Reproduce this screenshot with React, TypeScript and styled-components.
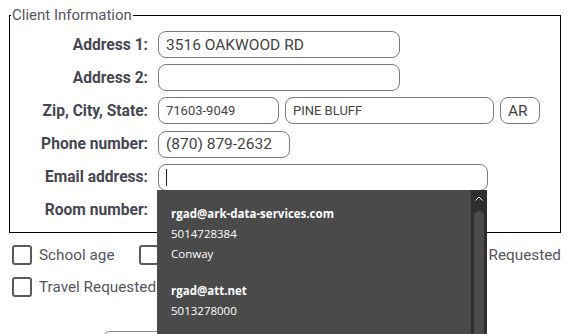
import React from 'react';
import styled, { createGlobalStyle } from 'styled-components';

const GlobalStyle = createGlobalStyle`
  html, body {
    margin: 0;
    padding: 0;
    background: #fff;
    overflow: hidden;
  }
  body {
    font-family: Roboto, "Liberation Sans", sans-serif;
  }
`;

const Page = styled.div`
  width: 567px;
  height: 334px;
  overflow: hidden;
  padding: 7px 6px 0 9px;
  box-sizing: border-box;
`;

const FieldSet = styled.fieldset`
  margin: 0;
  padding: 0 0 8px 0;
  border: 1px solid #000;
  min-width: 0;
`;

const Legend = styled.legend`
  padding: 0 1px;
  margin-left: 1px;
  font-size: 15px;
  color: #555560;
  line-height: 16px;
`;

const FormGrid = styled.div`
  display: grid;
  grid-template-columns: 138px auto;
  column-gap: 10px;
  row-gap: 6.2px;
  align-items: center;
  padding-top: 8px;
`;

const Label = styled.label`
  text-align: right;
  font-weight: 700;
  font-size: 15.6px;
  color: #464652;
`;

const Inputs = styled.div`
  display: flex;
  gap: 6px;
  align-items: center;
`;

const TextBox = styled.div<{ w: number; small?: boolean }>`
  position: relative;
  width: ${p => p.w}px;
  height: 27px;
  box-sizing: border-box;
  border: 1px solid #7a7a7a;
  border-radius: 8px;
  padding: 0 7px;
  display: flex;
  align-items: center;
  font-size: ${p => (p.small ? 13 : 15.5)}px;
  color: #444;
`;

const Caret = styled.span`
  display: inline-block;
  width: 1px;
  height: 17px;
  background: #222;
`;

const Dropdown = styled.div`
  position: absolute;
  top: 25px;
  left: -2px;
  width: 330px;
  height: 160px;
  background: #4a4a4a;
  z-index: 5;
  font-family: "Open Sans", "Noto Sans", sans-serif;
  color: #fff;
`;

const Options = styled.div`
  padding: 14px 0 0 14px;
  font-size: 11.5px;
  line-height: 20px;
`;

const Option = styled.div`
  margin-bottom: 17px;
`;

const Email = styled.div`
  font-weight: 700;
`;

const ScrollTrack = styled.div`
  position: absolute;
  top: 0;
  right: 0;
  width: 16px;
  height: 100%;
  background: #2e2e2e;
`;

const ScrollUp = styled.div`
  height: 18px;
  display: flex;
  align-items: center;
  justify-content: center;
`;

const ScrollThumb = styled.div`
  margin: 3px 3px 0 3px;
  height: 200px;
  background: #4b4b4b;
  border-radius: 5px 5px 0 0;
`;

const Checks = styled.div`
  display: flex;
  flex-direction: column;
  gap: 12px;
  padding: 12px 0 0 3px;
`;

const CheckRow = styled.div`
  display: flex;
  gap: 24px;
`;

const CheckItem = styled.label<{ push?: boolean }>`
  display: flex;
  align-items: center;
  gap: 7px;
  font-size: 15.3px;
  color: #555560;
  margin-left: ${p => (p.push ? 'auto' : '0')};
`;

const Box = styled.span`
  width: 20px;
  height: 20px;
  box-sizing: border-box;
  border: 2px solid #5a5a66;
  border-radius: 3px;
`;

const Actions = styled.div`
  padding: 34px 0 0 93px;
`;

const Btn = styled.button`
  width: 120px;
  height: 30px;
  border: 1px solid #888;
  border-radius: 8px;
  background: #fff;
  color: #444;
`;

const suggestions = [
  { email: 'rgad@ark-data-services.com', phone: '5014728384', city: 'Conway' },
  { email: 'rgad@att.net', phone: '5013278000', city: '' },
];

export default function App() {
  return (
    <Page>
      <GlobalStyle />
      <FieldSet>
        <Legend>Client Information</Legend>
        <FormGrid>
          <Label>Address 1:</Label>
          <Inputs><TextBox w={242}>3516 OAKWOOD RD</TextBox></Inputs>

          <Label>Address 2:</Label>
          <Inputs><TextBox w={242} /></Inputs>

          <Label>Zip, City, State:</Label>
          <Inputs>
            <TextBox w={121} small>71603-9049</TextBox>
            <TextBox w={209} small>PINE BLUFF</TextBox>
            <TextBox w={40}>AR</TextBox>
          </Inputs>

          <Label>Phone number:</Label>
          <Inputs><TextBox w={132}>(870) 879-2632</TextBox></Inputs>

          <Label>Email address:</Label>
          <Inputs>
            <TextBox w={330}>
              <Caret />
              <Dropdown>
                <Options>
                  {suggestions.map(s => (
                    <Option key={s.email}>
                      <Email>{s.email}</Email>
                      <div>{s.phone}</div>
                      <div>{s.city}</div>
                    </Option>
                  ))}
                </Options>
                <ScrollTrack>
                  <ScrollUp>
                    <svg width="8" height="5" viewBox="0 0 8 5">
                      <path d="M0.5 4.5 L4 1 L7.5 4.5" fill="none" stroke="#fff" strokeWidth="1" />
                    </svg>
                  </ScrollUp>
                  <ScrollThumb />
                </ScrollTrack>
              </Dropdown>
            </TextBox>
          </Inputs>

          <Label>Room number:</Label>
          <Inputs><TextBox w={132} /></Inputs>
        </FormGrid>
      </FieldSet>
      <Checks>
        <CheckRow>
          <CheckItem><Box />School age</CheckItem>
          <CheckItem><Box />Disabled</CheckItem>
          <CheckItem push><Box />Interpreter Requested</CheckItem>
        </CheckRow>
        <CheckRow>
          <CheckItem><Box />Travel Requested</CheckItem>
        </CheckRow>
      </Checks>
      <Actions>
        <Btn>Save</Btn>
      </Actions>
    </Page>
  );
}
